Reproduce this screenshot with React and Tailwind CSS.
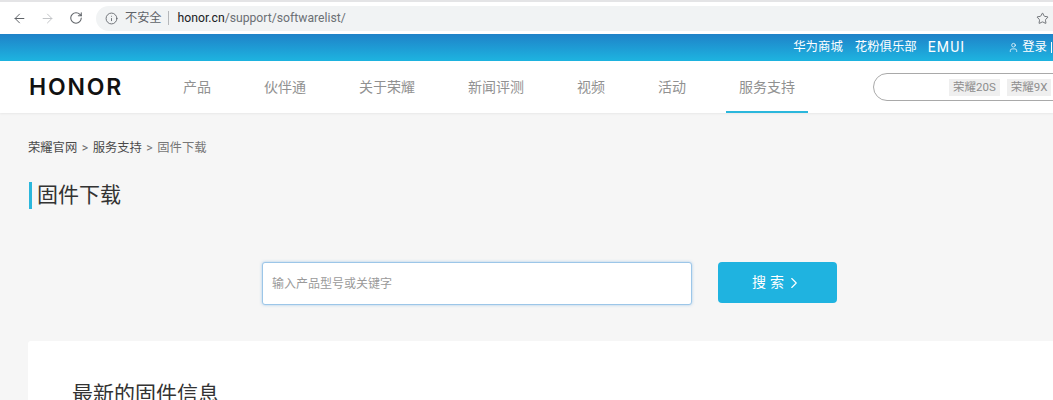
import React from 'react';
import { ArrowLeft, ArrowRight, RotateCw, Info, Star, User, ChevronRight } from 'lucide-react';

const cjk = "font-['Roboto','Noto_Sans_CJK_SC',sans-serif]";

const navItems = ['产品', '伙伴通', '关于荣耀', '新闻评测', '视频', '活动'];

const App = () => {
  return (
    <div className={`h-[400px] w-[1053px] overflow-hidden bg-[#f6f6f6] ${cjk}`}>
      {/* browser bar */}
      <div className="flex h-[34px] items-center border-t-[2px] border-[#e4e4e6] bg-white pl-[12px]">
        <ArrowLeft size={15} strokeWidth={1.6} className="text-[#5f6368]" />
        <ArrowRight size={15} strokeWidth={1.6} className="ml-[13px] text-[#c3c5c8]" />
        <RotateCw size={14} strokeWidth={1.8} className="ml-[14px] text-[#5f6368]" />
        <div className="ml-[13px] flex h-[25px] flex-1 items-center rounded-l-full bg-[#f1f3f4] pl-[9px] text-[12.2px]">
          <Info size={13} strokeWidth={1.6} className="text-[#5f6368]" />
          <span className="ml-[7px] text-[#5f6368]">不安全</span>
          <span className="ml-[6px] mr-[9px] h-[14px] w-px bg-[#b5b7ba]" />
          <span className="text-[#202124]">honor.cn</span>
          <span className="text-[#6c7074]">/support/softwarelist/</span>
          <Star size={13} strokeWidth={1.6} className="ml-auto mr-[4px] text-[#5f6368]" />
        </div>
      </div>

      {/* top strip */}
      <div className="flex h-[27px] items-center justify-end bg-gradient-to-b from-[#1f82c8] to-[#1eb4e0] text-[12.4px] text-white">
        <span>华为商城</span>
        <span className="ml-[12px]">花粉俱乐部</span>
        <span className="ml-[11px] text-[14px] tracking-[1.1px]">EMUI</span>
        <User size={11} strokeWidth={1.6} className="ml-[43px]" />
        <span className="ml-[3px]">登录</span>
        <span className="ml-[4px] mr-[1px] h-[11px] w-px bg-white" />
      </div>

      {/* main nav */}
      <div className="flex h-[52px] items-center overflow-hidden whitespace-nowrap bg-white pl-[29px] shadow-[0_1px_2px_rgba(0,0,0,0.06)]">
        <span className="w-[154px] shrink-0 font-['Inter',sans-serif] text-[23px] font-semibold tracking-[1.8px] text-[#111]">HONOR</span>
        <div className="flex shrink-0 gap-[53px] text-[14px] text-[#919191]">
          {navItems.map((item) => (
            <span key={item}>{item}</span>
          ))}
        </div>
        <div className="relative ml-[53px] flex h-full shrink-0 items-center text-[14px] text-[#919191]">
          <span>服务支持</span>
          <span className="absolute bottom-0 left-[-13px] h-[2px] w-[82px] bg-[#2bb7dc]" />
        </div>
        <div className="ml-[78px] flex h-[28px] w-[220px] shrink-0 items-center rounded-l-full border border-[#a9a9a9] pl-[75px] text-[11.5px] text-[#8d8d8d]">
          <span className="bg-[#efefef] px-[4px] py-px leading-[15px]">荣耀20S</span>
          <span className="ml-[7px] bg-[#efefef] px-[4px] py-px leading-[15px]">荣耀9X</span>
        </div>
      </div>

      {/* breadcrumb + title */}
      <div className="flex pl-[28px] pt-[27px] text-[12.3px] leading-[17px]">
        <span className="text-[#4a4a4a]">荣耀官网</span>
        <span className="mx-[4.5px] text-[#6a6a6a]">&gt;</span>
        <span className="text-[#4a4a4a]">服务支持</span>
        <span className="mx-[4.5px] text-[#777]">&gt;</span>
        <span className="text-[#777]">固件下载</span>
      </div>
      <div className="ml-[29px] mt-[25px] flex h-[27px] items-center border-l-[3px] border-[#2bb7dc] pl-[5px] text-[21px] text-[#333]">
        固件下载
      </div>

      {/* search */}
      <div className="ml-[262px] mt-[53px] flex items-start">
        <div className="flex h-[43px] w-[430px] items-center rounded-[3px] border border-[#9cc6e8] bg-white pl-[9px] text-[12px] text-[#9a9a9a] shadow-[0_0_3px_rgba(90,160,220,0.5)]">
          输入产品型号或关键字
        </div>
        <button className="ml-[26px] flex h-[41px] w-[119px] items-center justify-center rounded-[4px] bg-[#1fb3e0] text-[14px] tracking-[4px] text-white">
          搜索
          <ChevronRight size={18} strokeWidth={1.5} className="-ml-[3px]" />
        </button>
      </div>

      {/* firmware card */}
      <div className="ml-[28px] mt-[36px] h-[200px] rounded-tl-[3px] bg-white pl-[44px] pt-[39px] text-[21px] leading-[28px] text-[#333]">
        最新的固件信息
      </div>
    </div>
  );
};

export default App;
